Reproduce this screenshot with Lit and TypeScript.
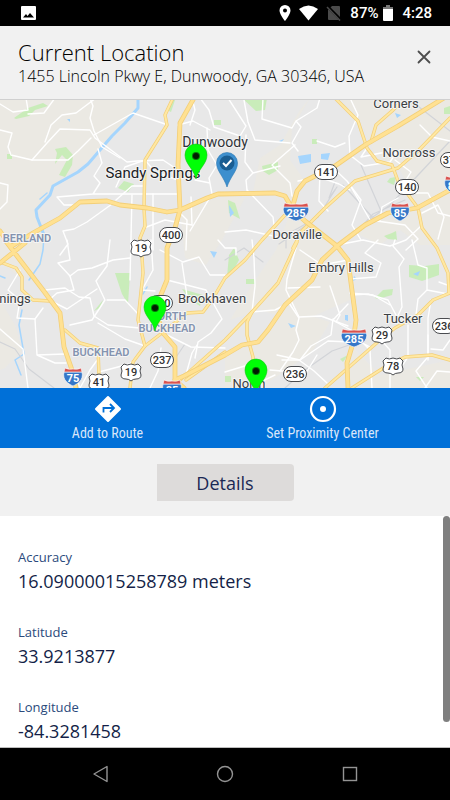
import { LitElement, html, svg, css } from "lit";
import { customElement, property } from "lit/decorators.js";

const HIGHWAYS = [
  "M0 231L8 243L12 246L33 233L60 218L80 202L107 201L120 205L147 208L167 212L180 210L207 198L218 194L275 193L285 196L293 210L305 221L337 246L348 260L351 283L356 320L353 343L347 363L348 388",
  "M194 98L180 123L178 165L180 210L175 228L167 248L167 280L160 297L158 318L163 333L175 347L175 380L184 388",
  "M175 380L184 376L225 355L242 345L258 342L268 330L285 305L312 280L322 260L337 246L365 225L388 213L417 208L450 190",
  "M293 205L297 191L305 181L335 166L365 145L398 126L444 98",
  "M0 263L25 243M5 240L20 260L43 290L60 313L64 347L72 370L76 388",
];

const ROADS = [
  "M173 98L165 115L167 125L157 141L145 160L144 208L145 226L140 238L142 257L143 273L138 320L145 346L133 362L130 388",
  "M145 346L162 333L187 313L203 312L212 300L225 278L245 260L262 240L285 215L293 208",
  "M293 248L302 231L325 208L355 181L398 168L418 151L450 118M297 242L278 283L252 312L225 340L180 380",
  "M335 98L358 121L367 148L377 161L392 165L398 181L418 208L422 228L437 248L448 273L449 293",
  "M398 105L392 111L376 125L371 142",
  "M0 262L16 268L22 277L22 290L33 300L50 301",
  "M65 330L80 343L98 348L99 376",
  "M252 312L247 322L247 335L253 357L254 388",
  "M450 293L433 300L418 315L395 328L380 340L348 368L325 388",
  "M450 360L432 355L405 357L385 367L352 388",
  "M225 352L186 380",
];

const STREETS = [
  "M0 130L12 133L8 147L11 155L32 160L47 143L60 129L90 130L95 138L127 162L137 161L163 160L178 170",
  "M26 98L28 110L13 112L0 104M55 98L44 113L28 114M96 98L76 113L62 115L51 125L45 142",
  "M90 98L93 106L90 118L94 131L102 147L120 158M94 135L133 113L165 124",
  "M32 160L68 160L78 151L91 138M0 183L8 185L7 202L0 209",
  "M98 149L102 163L94 176L100 183L93 194L57 197L64 205L78 205M93 194L178 194M112 204L87 222L74 229L63 231L68 244L60 255",
  "M116 200L132 186L144 186M116 187L125 167L145 160L155 172L178 180M132 195L130 280M153 194L153 250M190 125L195 110L192 98M178 125L193 121L210 130",
  "M207 128L208 150L217 165L209 178L212 194L190 231M195 180L210 183M191 197L192 225L165 220L144 228",
  "M180 213L187 220L186 250M200 98L209 110L214 127L240 136L246 126L228 98",
  "M263 98L262 119L292 128L296 121L317 108L320 98M296 121L301 127L292 143L298 151M317 141L335 147L345 143M295 145L272 165L290 183L292 196",
  "M246 135L245 162L253 173L246 180L247 190M253 173L280 166M350 98L358 115L349 136L350 155L364 166L390 162L397 151",
  "M244 100L248 122L255 140L290 143M320 171L319 201L328 211M329 164L347 181L361 200L352 225L361 240",
  "M298 181L319 177L339 184L350 190M367 148L361 157L381 153L409 150M420 125L432 137L450 141M395 160L411 172L401 188",
  "M350 185L370 220L405 225L418 239L406 250M380 220L382 207L398 198M405 193L428 193L438 213L450 216",
  "M337 245L363 240L390 246L406 240L420 227M422 213L438 205L444 217L438 239",
  "M67 240L70 260L58 263L70 276L78 270L92 268L113 260L130 258M110 240L107 266L96 281L105 300L92 320L70 325",
  "M70 276L74 290L57 293L49 300L67 309L97 289M45 290L65 288L79 297L90 298L94 316L108 325L150 329",
  "M107 300L125 300L139 315M98 323L125 339L145 346M20 270L8 290L20 300L17 318L35 319L43 308",
  "M35 319L37 355L55 363L66 363M0 329L23 349L28 388M37 355L65 354M74 370L80 388M93 346L98 359L90 370L80 388M145 346L125 370",
  "M151 240L153 270L142 290L155 291M160 250L183 262L199 257L210 275L225 275M182 263L187 296L204 302L224 296",
  "M167 280L206 290L222 319L211 333L198 342L195 358M167 335L191 347L225 348M185 378L192 353L197 345",
  "M252 240L254 258L255 286L252 312L275 310L289 303L299 318L296 330L299 340L293 352L280 371",
  "M296 248L287 279L286 290L299 317L321 316L348 326M288 288L320 287M300 250L322 265L348 260",
  "M330 286L340 315L336 322L351 330M333 319L331 335L311 346L300 360L277 355M348 304L333 320M351 295L368 294L388 300L396 315",
  "M350 279L376 277L381 263L365 253L378 240M350 293L373 295L390 305M395 240L393 246L404 259L399 267L402 307L395 322",
  "M412 240L418 265L427 268L427 290L418 299L416 315M427 290L448 294M431 300L428 318L428 360M439 282L450 286",
  "M360 340L370 350L372 388M381 340L390 350L390 388M408 325L408 357L399 370M428 335L428 354M370 347L344 333",
  "M299 360L314 371L327 383M282 360L300 360L328 341L350 342M270 370L306 373L317 355M225 372L248 365M254 385L275 375",
  "M218 240L225 248L236 248L236 255M225 232L246 230L282 238L295 231M247 190L273 217L275 233",
  "M427 388L416 371L427 358M450 340L443 350L431 349M450 372L437 371L425 388M102 388L99 372L133 363M161 348L158 371L150 388",
];

const RAILS = [
  "M450 141L390 205L370 219M343 185L375 220M361 165L381 211M335 190L318 217L279 244M405 200L373 214L364 224",
  "M285 388L305 370L332 351L352 344M185 344L170 366M0 342L15 349L29 369L54 388M410 100L450 131",
  "M335 182L329 198L337 187M318 217L286 235L286 248M225 260L244 248L263 262",
];

const BEIGE = [
  "M0 98H139L138 108L112 136L84 164L53 186L36 210L43 240L42 265L23 280L0 262Z",
  "M310 98L292 128L290 160L305 181L293 205L300 220L336 246L348 270L350 300L300 322L260 310L230 320L252 285L276 250L292 208L285 192L253 192L260 158L280 145L300 110Z",
  "M340 98H450V245H420L400 230L380 245L350 230L388 211L418 205L400 170L378 162L362 125Z",
  "M180 210L225 196L245 198L222 240L206 265L185 258Z",
  "M0 300L15 325L22 350L5 368L0 370ZM259 342L286 308L330 322L312 352L260 388H225V355Z",
  "M350 345L380 375L450 360V388H348Z",
];

const PARKS = [
  "M14 118L28 108L43 103L48 106L35 110L29 116L16 119ZM7 154H12V159H7Z",
  "M55 149L66 147L73 155L72 165L65 177L59 175L67 160L62 155L55 164L57 153Z",
  "M118 188L124 181L134 184L128 192ZM171 100H175L171 112L167 110Z",
  "M242 98H267L265 110L256 111ZM262 166L278 162V170L269 175L263 171ZM312 139H317V144H312Z",
  "M390 178L396 177L394 185L387 182ZM392 233L396 231L397 240L388 239L384 236Z",
  "M115 273H130L128 304L122 294ZM94 311L103 300L100 308ZM182 289L203 295L200 306L190 300Z",
  "M229 255L234 248L239 260L232 273L227 277ZM246 279H255V284H246Z",
  "M375 298L383 290L393 289L392 295L378 299ZM409 265L425 266L439 264V275L422 281L409 277Z",
  "M444 108L450 106V114H444ZM214 120H221V125H214ZM228 200L235 203L240 219L229 213Z",
  "M340 359L348 355L343 362ZM416 377H424L420 381ZM225 376H231V382H225Z",
];

const LAKES = [
  "M298 156L311 154V162L300 164ZM321 154L330 153L328 160L321 159ZM395 113L401 115L397 118Z",
  "M279 141L284 139L281 143ZM229 205L234 213L230 217ZM345 315H348V321L345 320ZM288 323L296 326L291 328Z",
  "M210 251L217 252L214 258ZM413 274L420 271L418 276ZM67 119H70V122ZM354 276L357 279L353 281Z",
];

interface Label { text: string; x: number; y: number; kind: string }
const LABELS: Label[] = [
  { text: "Corners", x: 396, y: 108, kind: "town" },
  { text: "Norcross", x: 409, y: 157, kind: "town" },
  { text: "Doraville", x: 297, y: 239, kind: "town" },
  { text: "Embry Hills", x: 341, y: 272, kind: "town" },
  { text: "Brookhaven", x: 212, y: 303, kind: "town" },
  { text: "Tucker", x: 403, y: 323, kind: "town" },
  { text: "nings", x: 15, y: 303, kind: "town" },
  { text: "North", x: 249, y: 388, kind: "town" },
  { text: "Dunwoody", x: 215, y: 147, kind: "suburb" },
  { text: "Sandy Springs", x: 153, y: 178, kind: "city" },
  { text: "BERLAND", x: 27, y: 242, kind: "area" },
  { text: "NORTH", x: 168, y: 320, kind: "area" },
  { text: "BUCKHEAD", x: 167, y: 332, kind: "area" },
  { text: "BUCKHEAD", x: 101, y: 356, kind: "area" },
];

interface Shield { type: "state" | "us" | "interstate"; text: string; x: number; y: number }
const SHIELDS: Shield[] = [
  { type: "state", text: "141", x: 326, y: 172 },
  { type: "state", text: "140", x: 407, y: 187 },
  { type: "state", text: "378", x: 452, y: 160 },
  { type: "state", text: "400", x: 171, y: 235 },
  { type: "state", text: "400", x: 161, y: 303 },
  { type: "state", text: "237", x: 162, y: 360 },
  { type: "state", text: "236", x: 295, y: 374 },
  { type: "state", text: "236", x: 444, y: 326 },
  { type: "us", text: "19", x: 141, y: 248 },
  { type: "us", text: "19", x: 131, y: 372 },
  { type: "us", text: "41", x: 99, y: 382 },
  { type: "us", text: "29", x: 382, y: 335 },
  { type: "us", text: "78", x: 393, y: 366 },
  { type: "interstate", text: "285", x: 296, y: 211 },
  { type: "interstate", text: "285", x: 354, y: 337 },
  { type: "interstate", text: "85", x: 400, y: 211 },
  { type: "interstate", text: "85", x: 454, y: 184 },
  { type: "interstate", text: "75", x: 73, y: 376 },
  { type: "interstate", text: "85", x: 172, y: 388 },
];

@customElement("area-map")
export class AreaMap extends LitElement {
  static styles = css`
    :host { display: block; overflow: hidden; background: #e8e8e8; }
    .map { display: block; width: 100%; height: 100%; font-family: Roboto, sans-serif; }
    .beige { fill: #ebe9e3; }
    .park { fill: #c3ecb2; opacity: 0.85; }
    .lake { fill: #a5d5fd; }
    .river, .rail, .street, .casing, .road { fill: none; stroke-linejoin: round; stroke-linecap: round; }
    .river { stroke: #a5d5fd; stroke-width: 3; }
    .creek { stroke-width: 1.5; }
    .rail { stroke: #d2d4d8; stroke-width: 1.2; }
    .street { stroke: #fff; stroke-width: 1.4; }
    .casing { stroke: #f3cf78; stroke-width: 3.4; }
    .road { stroke: #ffe8a3; stroke-width: 2; }
    .casing.wide { stroke-width: 4.8; }
    .road.wide { stroke-width: 3.2; stroke: #ffe192; }
    .label { text-anchor: middle; paint-order: stroke; stroke: #f5f5f5; stroke-width: 2px; stroke-linejoin: round; }
    .town { font-size: 13px; fill: #3c4043; }
    .suburb { font-size: 14px; fill: #303338; }
    .city { font-size: 15px; fill: #202124; }
    .area { font-size: 11px; font-weight: 600; fill: #8493af; }
    .sign { fill: #fff; stroke: #4a4c50; stroke-width: 1; }
    .number { font-size: 11px; font-weight: 500; fill: #333; text-anchor: middle; }
    .blue { fill: #3577c8; stroke: #fff; stroke-width: 0.6; }
    .red { fill: #d9534f; stroke: #fff; stroke-width: 0.6; }
    .on-blue { fill: #fff; font-weight: 700; }
    .pin { fill: #00ff06; stroke: #10c516; stroke-width: 0.6; }
    .dot { fill: #021d02; }
    .halo { fill: #067a08; }
    .here { fill: #3d8fce; stroke: #2b78b4; stroke-width: 0.6; }
    .here-disc { fill: #195d92; }
    .tick { fill: none; stroke: #fff; stroke-width: 2; }
  `;

  private shield(s: Shield) {
    const place = `translate(${s.x} ${s.y})`;
    if (s.type === "state") {
      return svg`<g transform=${place}><rect class="sign" x="-11.5" y="-7.5" width="23" height="15" rx="7.5"></rect><text class="number" y="4">${s.text}</text></g>`;
    }
    if (s.type === "us") {
      return svg`<g transform=${place}><path class="sign" d="M-7 -8Q-4 -6 0 -8Q4 -6 7 -8L10 -5Q8 -1 10 3Q10 7 5 7Q2 7 0 9Q-2 7 -5 7Q-10 7 -10 3Q-8 -1 -10 -5Z"></path><text class="number" y="4">${s.text}</text></g>`;
    }
    const w = s.text.length > 2 ? 12.5 : 9;
    return svg`<g transform=${place}>
      <path class="blue" d="M${-w} -4H${w}C${w + 2} 4 ${w / 2} 8 0 10C${-w / 2} 8 ${-w - 2} 4 ${-w} -4Z"></path>
      <path class="red" d="M${-w} -4L${-w + 1} -8Q${-w / 2} -6 0 -7Q${w / 2} -6 ${w - 1} -8L${w} -4Z"></path>
      <text class="number on-blue" y="6">${s.text}</text></g>`;
  }

  private pin(x: number, y: number) {
    return svg`<g transform="translate(${x} ${y})"><path class="pin" d="M0 23C-2 13 -11 8 -11 -1A11 11 0 0 1 11 -1C11 8 2 13 0 23Z"></path><circle class="halo" r="4"></circle><circle class="dot" r="3"></circle></g>`;
  }

  render() {
    return html`<svg class="map" viewBox="0 100 450 288" preserveAspectRatio="xMidYMid slice" role="img" aria-label="Map of Dunwoody and nearby towns">
      ${BEIGE.map((d) => svg`<path class="beige" d=${d}></path>`)}
      ${PARKS.map((d) => svg`<path class="park" d=${d}></path>`)}
      ${LAKES.map((d) => svg`<path class="lake" d=${d}></path>`)}
      <path class="river" d="M138 98V108L125 123L112 136L100 150L88 164L78 172L53 186L50 195L36 210L37 217L44 235"></path>
      <path class="river creek" d="M44 235L43 250L40 264L29 280M0 276L5 278M22 310L19 325L24 354L15 360L21 375M143 294L147 287M40 199L47 193"></path>
      ${RAILS.map((d) => svg`<path class="rail" d=${d}></path>`)}
      ${STREETS.map((d) => svg`<path class="street" d=${d}></path>`)}
      ${ROADS.map((d) => svg`<path class="casing" d=${d}></path>`)}
      ${ROADS.map((d) => svg`<path class="road" d=${d}></path>`)}
      ${HIGHWAYS.map((d) => svg`<path class="casing wide" d=${d}></path>`)}
      ${HIGHWAYS.map((d) => svg`<path class="road wide" d=${d}></path>`)}
      ${LABELS.map((l) => svg`<text class="label ${l.kind}" x=${l.x} y=${l.y}>${l.text}</text>`)}
      ${SHIELDS.map((s) => this.shield(s))}
      <g transform="translate(227 163)">
        <path class="here" d="M0 24C-3 14 -10.500 8 -10.500 0A10.500 10.500 0 0 1 10.500 0C10.500 8 3 14 0 24Z"></path>
        <circle class="here-disc" r="7.500"></circle>
        <path class="tick" d="M-4 0L-1 3L4.500 -3"></path>
      </g>
      ${this.pin(196, 156)} ${this.pin(155, 308)} ${this.pin(256, 371)}
    </svg>`;
  }
}

@customElement("detail-field")
export class DetailField extends LitElement {
  @property() label = "";
  @property() value = "";

  static styles = css`
    :host { display: block; }
    .pair { margin: 0; }
    .label { font-size: 13px; line-height: 20px; color: #2b4a7c; }
    .value { margin: 0; font-size: 18px; line-height: 28px; color: #141f48; }
  `;

  render() {
    return html`<dl class="pair">
      <dt class="label">${this.label}</dt>
      <dd class="value">${this.value}</dd>
    </dl>`;
  }
}

@customElement("app-root")
export class AppRoot extends LitElement {
  static styles = css`
    :host {
      display: flex;
      flex-direction: column;
      height: 100vh;
      background: #fff;
      font-family: "Open Sans", "Noto Sans", sans-serif;
    }
    * { box-sizing: border-box; }
    button { border: 0; padding: 0; background: none; font: inherit; cursor: pointer; }
    svg { display: block; }
    .status {
      flex: none;
      display: flex;
      align-items: center;
      gap: 8px;
      height: 26px;
      padding: 0 18px 0 20px;
      background: #000;
      color: #fff;
      font: 500 15px/26px Roboto, sans-serif;
    }
    .status-icons { display: flex; align-items: center; gap: 8px; margin-left: auto; }
    .power { display: flex; align-items: center; gap: 4px; }
    .header {
      flex: none;
      display: flex;
      align-items: center;
      justify-content: space-between;
      height: 74px;
      padding: 0 16px 2px 18px;
      background: #f1f1f1;
      border-bottom: 1px solid #d0d0d0;
      color: #000;
    }
    .title { margin: 0; font-size: 22px; line-height: 28px; font-weight: 300; }
    .address { margin: 0; font-size: 16px; line-height: 20px; font-weight: 300; }
    .close { padding: 2px; margin-bottom: 10px; }
    .map { flex: none; height: 36vh; }
    .actions {
      flex: none;
      display: grid;
      grid-template-columns: 1fr 1fr;
      height: 60px;
      padding-right: 20px;
      background: #0070d8;
    }
    .action {
      display: flex;
      flex-direction: column;
      align-items: center;
      gap: 1px;
      padding-top: 7px;
      color: #d8e6fa;
      font: 14px/18px "Roboto Condensed", Roboto, sans-serif;
    }
    .tabs {
      flex: none;
      display: flex;
      justify-content: center;
      padding: 16px 0 15px;
      background: #f1f1f1;
    }
    .tab {
      width: 137px;
      height: 37px;
      border-radius: 0 4px 4px 0;
      background: #dddbda;
      color: #1a2854;
      font-size: 18px;
    }
    .body { flex: 1; min-height: 0; display: flex; overflow: hidden; border-bottom: 1px solid #bdbdbd; }
    .fields {
      flex: 1;
      display: flex;
      flex-direction: column;
      gap: 27px;
      padding: 31px 18px 0;
    }
    .scrollbar { width: 7px; height: 206px; border-radius: 4px; background: #7f7f7f; }
    .nav {
      flex: none;
      display: grid;
      grid-template-columns: repeat(3, 1fr);
      height: 52px;
      padding: 0 38px;
      background: #000;
    }
    .nav-button { display: flex; align-items: center; justify-content: center; }
  `;

  render() {
    return html`
      <div class="status">
        <svg width="17" height="15" viewBox="0 0 17 15" aria-hidden="true">
          <rect x="1" width="15" height="14" rx="1" fill="#fff"></rect>
          <path d="M3 11.500L6 8L7.500 10L10 7L14 11.500Z" fill="#000"></path>
        </svg>
        <div class="status-icons">
          <svg width="12" height="16" viewBox="0 0 12 16" aria-hidden="true">
            <path fill="#fff" fill-rule="evenodd" d="M6 0A5.500 5.500 0 0 1 11.500 5.500C11.500 9.500 6 16 6 16S.5 9.500 .5 5.500A5.500 5.500 0 0 1 6 0ZM6 3.500A2 2 0 1 0 6 7.500A2 2 0 1 0 6 3.500Z"></path>
          </svg>
          <svg width="19" height="16" viewBox="0 0 19 16" aria-hidden="true">
            <path fill="#fff" d="M9.500 15.500L0 4Q9.500 -3 19 4Z"></path>
          </svg>
          <svg width="16" height="16" viewBox="0 0 16 16" aria-hidden="true">
            <path fill="#4a4a4a" d="M6 1H13Q14 1 14 2V15H3Q2 15 2 14V5Z"></path>
            <path d="M1 1L15 15" stroke="#000" stroke-width="3"></path>
            <path d="M1 2L14 15.500" stroke="#4a4a4a" stroke-width="1.500"></path>
          </svg>
        </div>
        <div class="power">
          <span>87%</span>
          <svg width="12" height="16" viewBox="0 0 12 16" aria-hidden="true">
            <path fill="#777" d="M4 0H8V2H11V4H1V2H4Z"></path>
            <path fill="#fff" d="M1 4H11V15Q11 16 10 16H2Q1 16 1 15Z"></path>
          </svg>
        </div>
        <span>4:28</span>
      </div>

      <header class="header">
        <div>
          <h1 class="title">Current Location</h1>
          <p class="address">1455 Lincoln Pkwy E, Dunwoody, GA 30346, USA</p>
        </div>
        <button class="close" aria-label="Close">
          <svg width="16" height="16" viewBox="0 0 16 16"><path d="M2.500 2.500L13.500 13.500M13.500 2.500L2.500 13.500" stroke="#4d4d4d" stroke-width="1.800" stroke-linecap="round"></path></svg>
        </button>
      </header>

      <area-map class="map"></area-map>

      <div class="actions">
        <button class="action">
          <svg width="28" height="28" viewBox="0 0 28 28" aria-hidden="true">
            <path fill="#fff" stroke="#fff" stroke-width="2" stroke-linejoin="round" d="M14 2L26 14L14 26L2 14Z"></path>
            <path fill="none" stroke="#0070d8" stroke-width="1.800" d="M9.500 17.500V13H19.500M16 9L20 13L16 17"></path>
          </svg>
          <span>Add to Route</span>
        </button>
        <button class="action">
          <svg width="28" height="28" viewBox="0 0 28 28" aria-hidden="true">
            <circle cx="14" cy="14" r="12" fill="none" stroke="#fff" stroke-width="2.200"></circle>
            <circle cx="14" cy="14" r="3" fill="#fff"></circle>
          </svg>
          <span>Set Proximity Center</span>
        </button>
      </div>

      <div class="tabs"><button class="tab">Details</button></div>

      <main class="body">
        <div class="fields">
          <detail-field label="Accuracy" value="16.09000015258789 meters"></detail-field>
          <detail-field label="Latitude" value="33.9213877"></detail-field>
          <detail-field label="Longitude" value="-84.3281458"></detail-field>
        </div>
        <div class="scrollbar"></div>
      </main>

      <nav class="nav" aria-label="System">
        <button class="nav-button" aria-label="Back">
          <svg width="16" height="18" viewBox="0 0 16 18"><path d="M15 1.500V16.500L2 9Z" fill="none" stroke="#949494" stroke-width="1.400" stroke-linejoin="round"></path></svg>
        </button>
        <button class="nav-button" aria-label="Home">
          <svg width="18" height="18" viewBox="0 0 18 18"><circle cx="9" cy="9" r="7.500" fill="none" stroke="#949494" stroke-width="1.400"></circle></svg>
        </button>
        <button class="nav-button" aria-label="Recent apps">
          <svg width="16" height="16" viewBox="0 0 16 16"><rect x="1.500" y="1.500" width="13" height="13" fill="none" stroke="#949494" stroke-width="1.400"></rect></svg>
        </button>
      </nav>
    `;
  }
}
